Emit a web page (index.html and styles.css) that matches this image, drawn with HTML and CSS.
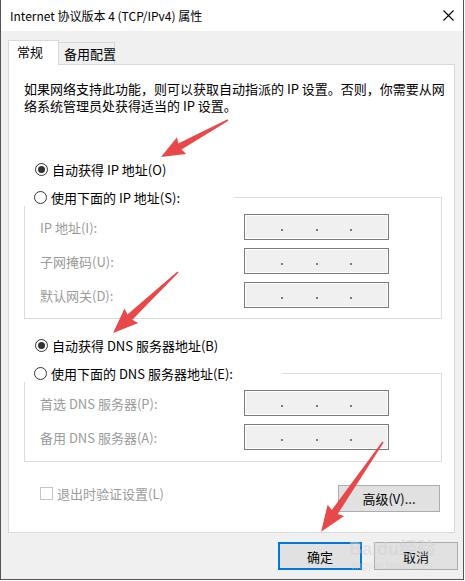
FILE: index.html
```html
<!DOCTYPE html>
<html lang="zh-CN">
<head>
    <meta charset="UTF-8">
    <meta name="viewport" content="width=device-width, initial-scale=1.0">
    <title>Internet 协议版本 4 (TCP/IPv4) 属性</title>
    <link rel="stylesheet" href="styles.css">
</head>
<body>
    <div class="window">
        <!-- Title bar -->
        <div class="titlebar">
            <span class="title">Internet 协议版本 4 (TCP/IPv4) 属性</span>
            <svg class="close" width="11" height="11" viewBox="0 0 11 11">
                <path d="M0.5 0.5 L10.5 10.5 M10.5 0.5 L0.5 10.5" stroke="#000" stroke-width="1.1" fill="none"/>
            </svg>
        </div>

        <div class="content">
            <!-- Tabs -->
            <div class="tabs">
                <div class="tab active">常规</div>
                <div class="tab">备用配置</div>
            </div>

            <div class="panel">
                <p class="intro">如果网络支持此功能，则可以获取自动指派的 IP 设置。否则，你需要从网<br>络系统管理员处获得适当的 IP 设置。</p>

                <div class="radio-row first">
                    <span class="radio checked"></span>
                    <span>自动获得 IP 地址(O)</span>
                </div>

                <fieldset class="group">
                    <legend class="legend-ip">
                        <span class="radio-row">
                            <span class="radio"></span>
                            <span>使用下面的 IP 地址(S):</span>
                        </span>
                    </legend>
                    <div class="field first">
                        <span class="label">IP 地址(I):</span>
                        <span class="ipbox"><i></i><b></b><i></i><b></b><i></i><b></b><i></i></span>
                    </div>
                    <div class="field">
                        <span class="label">子网掩码(U):</span>
                        <span class="ipbox"><i></i><b></b><i></i><b></b><i></i><b></b><i></i></span>
                    </div>
                    <div class="field">
                        <span class="label">默认网关(D):</span>
                        <span class="ipbox"><i></i><b></b><i></i><b></b><i></i><b></b><i></i></span>
                    </div>
                </fieldset>

                <div class="radio-row dns">
                    <span class="radio checked"></span>
                    <span>自动获得 DNS 服务器地址(B)</span>
                </div>

                <fieldset class="group dns-group">
                    <legend class="legend-dns">
                        <span class="radio-row">
                            <span class="radio"></span>
                            <span>使用下面的 DNS 服务器地址(E):</span>
                        </span>
                    </legend>
                    <div class="field first">
                        <span class="label">首选 DNS 服务器(P):</span>
                        <span class="ipbox"><i></i><b></b><i></i><b></b><i></i><b></b><i></i></span>
                    </div>
                    <div class="field">
                        <span class="label">备用 DNS 服务器(A):</span>
                        <span class="ipbox"><i></i><b></b><i></i><b></b><i></i><b></b><i></i></span>
                    </div>
                </fieldset>

                <div class="bottom-row">
                    <div class="check-row">
                        <span class="checkbox"></span>
                        <span>退出时验证设置(L)</span>
                    </div>
                    <button class="btn advanced">高级(V)...</button>
                </div>
            </div>

            <div class="footer">
                <button class="btn default">确定</button>
                <button class="btn">取消</button>
            </div>
        </div>

        <!-- Watermark -->
        <div class="watermark">
            <span class="wm-logo">Baidu经验</span>
            <span class="wm-url">jingyan.baidu.com</span>
        </div>

        <!-- Red annotation arrows -->
        <svg class="arrows" width="465" height="581" viewBox="0 0 465 581">
            <g fill="#e8484a">
                <polygon transform="translate(228 120) rotate(151.1)" points="0,-0.8 55,-3.4 53,-9.5 76.5,0 53,9.5 55,3.4 0,0.8"/>
                <polygon transform="translate(178 272) rotate(136.8)" points="0,-0.8 66,-3.6 64,-10 89,0 64,10 66,3.6 0,0.8"/>
                <polygon transform="translate(383 442) rotate(124.6)" points="0,-0.8 85,-3.6 83,-10 109,0 83,10 85,3.6 0,0.8"/>
            </g>
        </svg>
    </div>
</body>
</html>
```

FILE: styles.css
```css
/* General */
* {
    box-sizing: border-box;
}

body {
    margin: 0;
    font-family: "Noto Sans CJK SC", "Noto Sans", sans-serif;
    font-size: 13px;
    color: #000;
    background: #fff;
}

.window {
    position: relative;
    width: 464px;
    height: 580px;
    background: #f0f0f0;
    border-left: 1px solid #555;
    border-right: 1px solid #555;
    border-bottom: 1px solid #555;
}

/* Title bar */
.titlebar {
    height: 31px;
    background: #fff;
    display: flex;
    align-items: center;
    justify-content: space-between;
    padding: 0 9px 1px 9px;
}

.title {
    font-size: 12px;
}

.close {
    display: block;
}

/* Tabs */
.content {
    padding-top: 9px;
}

.tabs {
    display: flex;
    align-items: flex-end;
    margin-left: 7px;
    height: 25px;
    margin-bottom: -1px;
    position: relative;
    z-index: 1;
}

.tab {
    height: 22px;
    margin-bottom: 1px;
    width: 56px;
    padding-left: 5px;
    line-height: 21px;
    background: #f0f0f0;
    border: 1px solid #d9d9d9;
    border-left: none;
    border-bottom: none;
    white-space: nowrap;
}

.tab.active {
    height: 25px;
    margin-bottom: 0;
    width: 51px;
    padding-left: 8px;
    line-height: 22px;
    background: #fff;
    border-left: 1px solid #d9d9d9;
}

/* Panel */
.panel {
    margin-left: 7px;
    width: 447px;
    height: 469px;
    background: #fff;
    border: 1px solid #d9d9d9;
    padding: 15px 12px 0 15px;
}

.intro {
    margin: 0;
    line-height: 17px;
    white-space: nowrap;
}

/* Radios */
.radio-row {
    display: flex;
    align-items: center;
    height: 17px;
    gap: 4px;
    padding-left: 11px;
    white-space: nowrap;
}

.radio-row.first {
    margin-top: 47px;
}

.radio-row.dns {
    margin-top: 18px;
}

.radio {
    width: 13px;
    height: 13px;
    border: 1px solid #333;
    border-radius: 50%;
    display: flex;
    align-items: center;
    justify-content: center;
    background: #fff;
}

.radio.checked::after {
    content: "";
    width: 7px;
    height: 7px;
    border-radius: 50%;
    background: #333;
}

/* Group boxes */
.group {
    margin: 11px 0 0 0;
    border: 1px solid #dcdcdc;
    padding: 0 52px 10px 15px;
    min-width: 0;
}

.dns-group {
    padding-bottom: 11px;
}

.group legend {
    padding: 0;
    height: 17px;
    margin-left: -16px;
    background: #fff;
}

.group legend .radio-row {
    padding-left: 10px;
}

.legend-ip {
    width: 210px;
}

.legend-dns {
    width: 258px;
}

.field {
    display: flex;
    align-items: center;
    height: 26px;
    margin-top: 8px;
}

.label {
    flex: 1;
    color: #9b9b9b;
    white-space: nowrap;
}

.ipbox {
    width: 145px;
    height: 26px;
    border: 1px solid #7a7a7a;
    box-shadow: inset 0 0 0 1px #fff;
    background: #f0f0f0;
    display: flex;
    padding: 0 3px;
}

.ipbox i {
    flex: 1;
}

.ipbox b {
    width: 2px;
    height: 2px;
    margin-top: 14px;
    background: #7b7b7b;
}

/* Bottom row */
.bottom-row {
    display: flex;
    justify-content: space-between;
    align-items: flex-start;
    margin-top: 23px;
    padding-right: 2px;
}

.check-row {
    display: flex;
    align-items: center;
    gap: 4px;
    margin-top: 2px;
    padding-left: 16px;
    color: #9b9b9b;
    height: 13px;
}

.checkbox {
    width: 13px;
    height: 13px;
    border: 1px solid #c4c4c4;
    background: #fff;
}

.btn {
    font-family: inherit;
    font-size: 13px;
    color: #000;
    background: #e1e1e1;
    border: 1px solid #adadad;
    padding: 0;
    height: 28px;
    width: 84px;
}

.btn.advanced {
    width: 102px;
    height: 27px;
}

.btn.default {
    border: 2px solid #0078d7;
}

/* Footer */
.footer {
    display: flex;
    justify-content: flex-end;
    gap: 12px;
    margin-top: 9px;
    padding-right: 5px;
}

/* Watermark and arrows overlay */
.watermark {
    position: absolute;
    left: 345px;
    top: 539px;
    width: 92px;
    display: flex;
    flex-direction: column;
    align-items: center;
    color: rgba(210, 210, 210, 0.5);
    pointer-events: none;
}

.wm-logo {
    font-family: "Liberation Sans", "Noto Sans CJK SC", sans-serif;
    font-size: 18px;
    font-weight: bold;
    line-height: 21px;
    white-space: nowrap;
}

.wm-url {
    font-family: "Liberation Sans", sans-serif;
    font-size: 10px;
    line-height: 12px;
}

.arrows {
    position: absolute;
    left: -1px;
    top: 0;
    pointer-events: none;
}
```
